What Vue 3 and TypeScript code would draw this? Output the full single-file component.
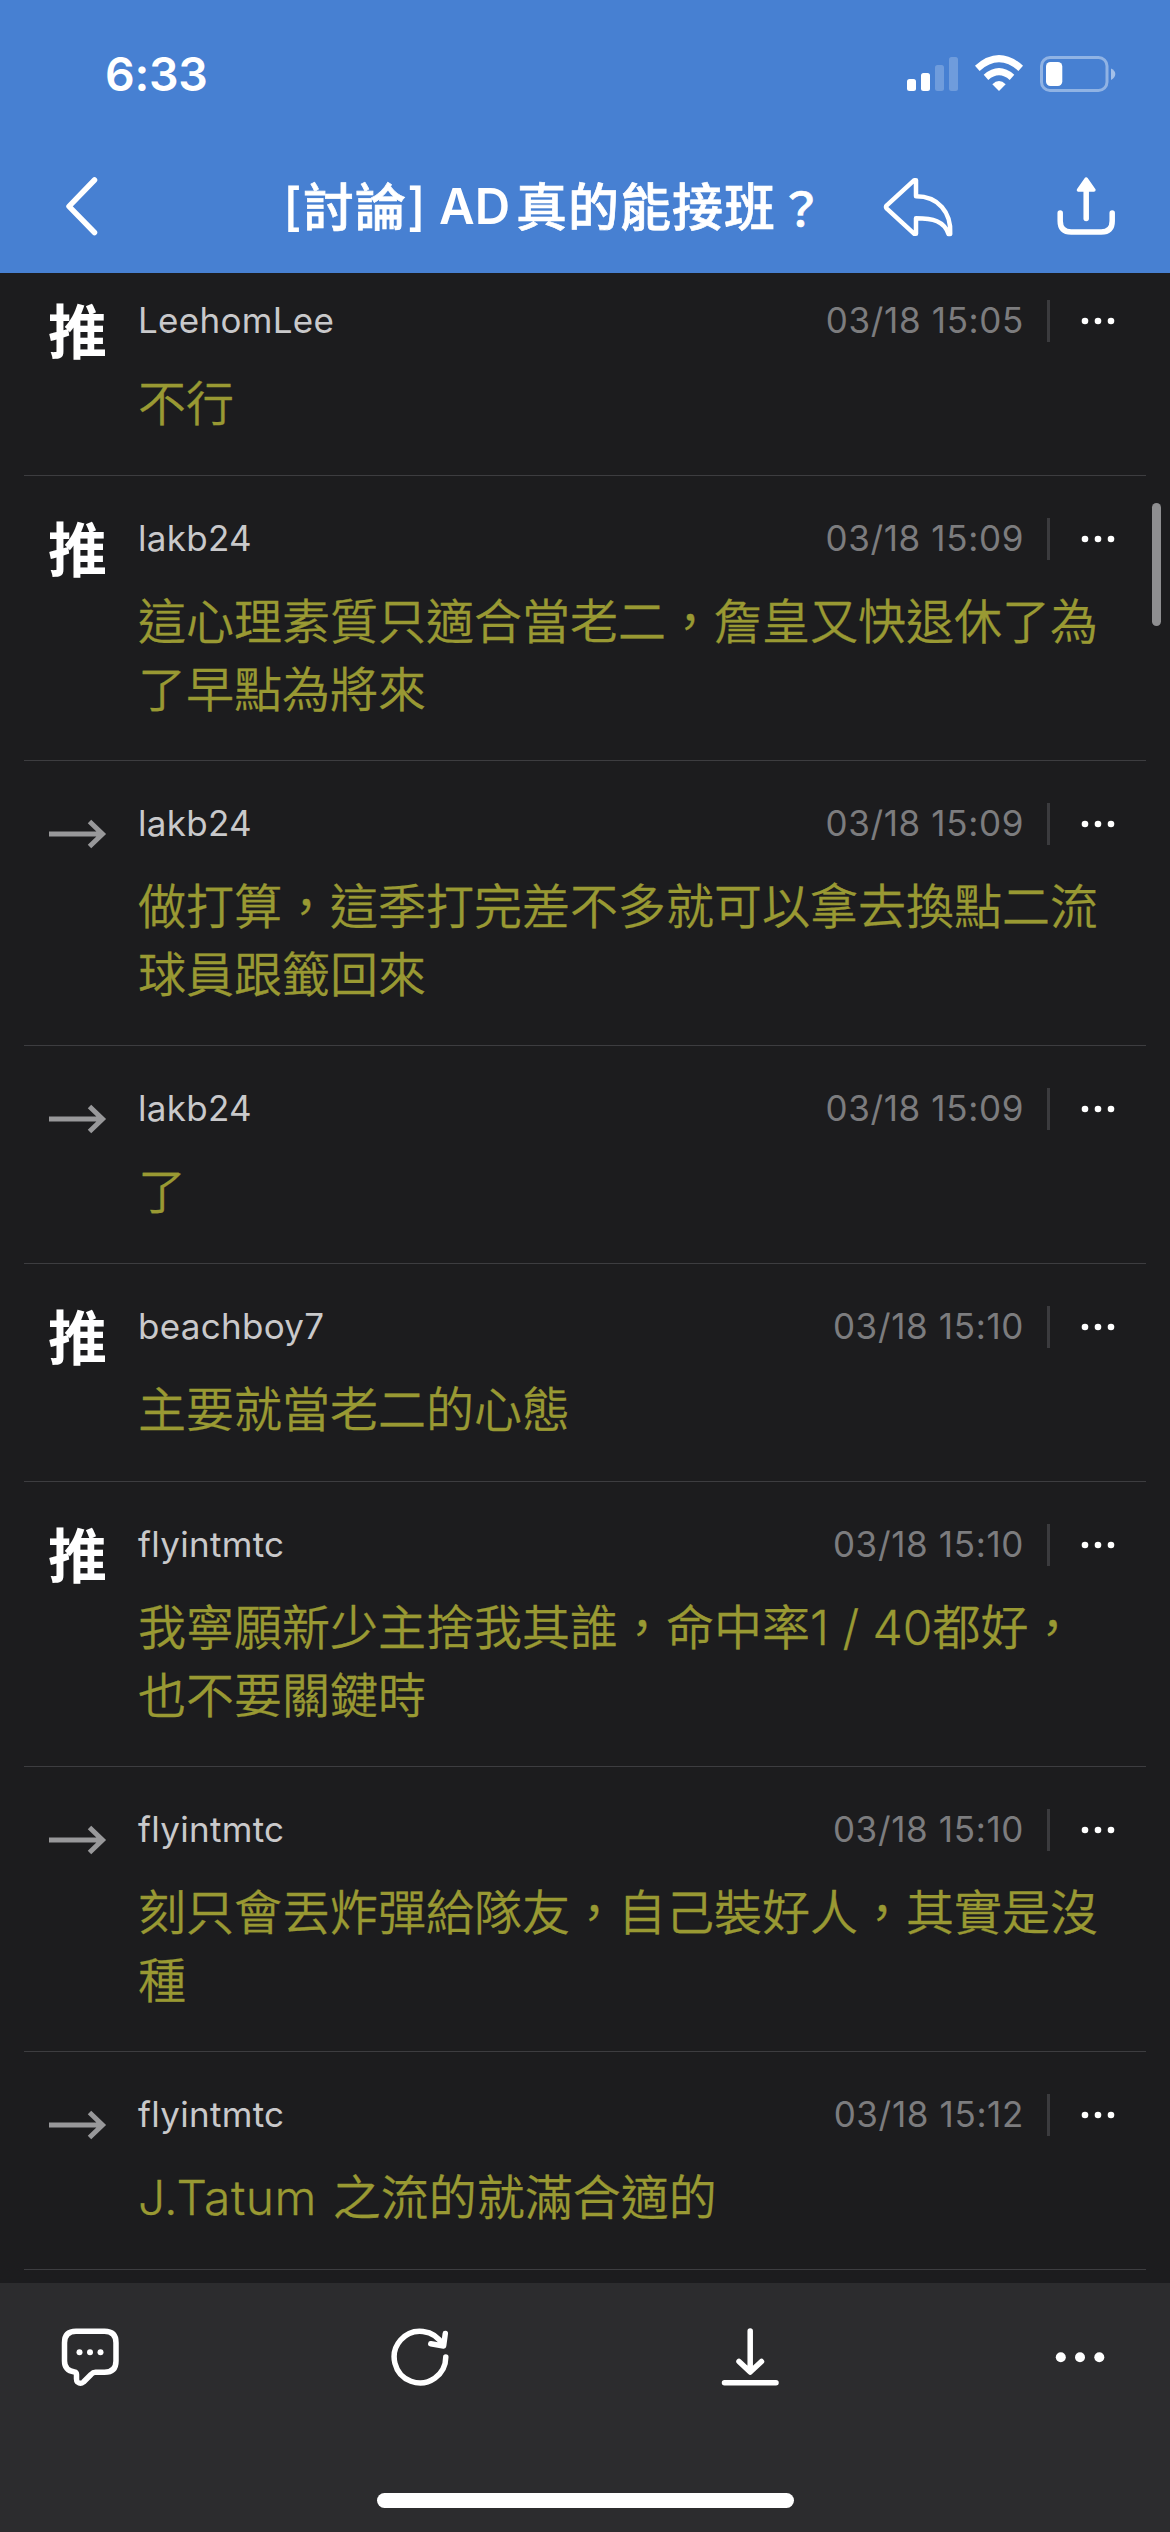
<script setup lang="ts">
interface Comment {
  kind: 'push' | 'arrow'
  user: string
  time: string
  lines: string[]
}

const comments: Comment[] = [
  { kind: 'push', user: 'LeehomLee', time: '03/18 15:05', lines: ['不行'] },
  { kind: 'push', user: 'lakb24', time: '03/18 15:09', lines: ['這心理素質只適合當老二，詹皇又快退休了為', '了早點為將來'] },
  { kind: 'arrow', user: 'lakb24', time: '03/18 15:09', lines: ['做打算，這季打完差不多就可以拿去換點二流', '球員跟籤回來'] },
  { kind: 'arrow', user: 'lakb24', time: '03/18 15:09', lines: ['了'] },
  { kind: 'push', user: 'beachboy7', time: '03/18 15:10', lines: ['主要就當老二的心態'] },
  { kind: 'push', user: 'flyintmtc', time: '03/18 15:10', lines: ['我寧願新少主捨我其誰，命中率1 / 40都好，', '也不要關鍵時'] },
  { kind: 'arrow', user: 'flyintmtc', time: '03/18 15:10', lines: ['刻只會丟炸彈給隊友，自己裝好人，其實是沒', '種'] },
  { kind: 'arrow', user: 'flyintmtc', time: '03/18 15:12', lines: ['J.Tatum 之流的就滿合適的'] },
]

// Latin words get slightly looser tracking than the Han text around them
const runs = (line: string) => line.split(/([A-Za-z.]+ ?)/).filter(Boolean)
const isLatin = (run: string) => /^[A-Za-z]/.test(run)
</script>

<template>
  <div class="screen" lang="zh-Hant-TW">
    <header class="top">
      <div class="status">
        <span class="clock">6:33</span>
        <svg class="indicators" width="212" height="44" viewBox="905 52 212 44" fill="#fff">
          <rect x="907" y="79" width="9" height="12" rx="2.5" />
          <rect x="921" y="73" width="9" height="18" rx="2.5" />
          <rect x="935" y="65" width="9" height="26" rx="2.5" opacity=".22" />
          <rect x="949" y="57" width="9" height="34" rx="2.5" opacity=".22" />
          <path d="M999 91 L992.3 84.2 Q999 77.6 1005.700 84.2 Z" />
          <g fill="none" stroke="#fff" stroke-width="7">
            <path d="M986 77.300 Q999 66 1012 77.300" />
            <path d="M977.300 68.300 Q999 49 1020.700 68.300" />
          </g>
          <rect x="1041.500" y="57.500" width="65.500" height="33" rx="8.500" fill="none" stroke="#fff" stroke-width="3" opacity=".4" />
          <rect x="1046" y="62" width="16.300" height="24" rx="4.500" />
          <path d="M1111 68.500 Q1115.300 70.500 1115.300 74 T1111 80 Z" opacity=".5" />
        </svg>
      </div>
      <nav class="bar">
        <svg width="60" height="60" viewBox="52 176 60 60" class="line back">
          <path d="M94.500 180 L69 206.300 L94.500 232.500" />
        </svg>
        <h1 class="title"><span class="br">[</span><span class="han">討論</span><span class="br close">]</span><span class="latin">AD</span><span class="han">真的能接班<span class="mark-q">？</span></span></h1>
        <svg width="72" height="62" viewBox="882 176 72 62" class="line reply">
          <path d="M914.300 180.200 L886.800 205.300 Q885.300 207 886.800 208.700 L914.300 233.800 H916 V218.300 C933 218.300 944 221 948.500 234 H950.200 C951.500 212 938 196.300 916 196.300 V180.200 Z" />
        </svg>
        <svg width="60" height="62" viewBox="1056 176 60 62" class="line share">
          <path d="M1060.200 213 V221 Q1060.200 232 1071.200 232 H1101.200 Q1112.200 232 1112.200 221 V213" />
          <path d="M1086.200 188 V218.500" />
          <path d="M1086.200 179 L1078.500 190 H1093.900 Z" fill="#fff" stroke-width="3.500" />
        </svg>
      </nav>
    </header>

    <main class="list">
      <article v-for="(c, i) in comments" :key="i" class="row" :class="{ tall: c.lines.length > 1 }">
        <div class="mark">
          <span v-if="c.kind === 'push'" class="push">推</span>
          <svg v-else class="arrow" width="60" height="30" viewBox="0 0 60 30">
            <path d="M0 15 H53 M40.500 2.500 L53.500 15 L40.500 27.500" />
          </svg>
        </div>
        <div class="body">
          <div class="meta">
            <span class="user">{{ c.user }}</span>
            <span class="time">{{ c.time }}</span>
            <i class="rule"></i>
            <svg class="dots" width="36" height="10" viewBox="0 0 36 10">
              <circle cx="5" cy="5" r="3.300" /><circle cx="18" cy="5" r="3.300" /><circle cx="31" cy="5" r="3.300" />
            </svg>
          </div>
          <p class="text">
            <span v-for="l in c.lines" :key="l" class="text-line"><span v-for="(r, n) in runs(l)" :key="n" :class="{ word: isLatin(r) }">{{ r }}</span></span>
          </p>
        </div>
      </article>
      <div class="thumb"></div>
    </main>

    <footer class="bottom">
      <div class="tools">
        <svg width="60" height="60" viewBox="60 2327 60 60" class="line">
          <path d="M76 2331.200 H104.500 Q116 2331.200 116 2342.700 V2361 Q116 2372.300 104.500 2372.300 H95.500 Q93 2372.300 91 2374.500 L83.500 2382 Q80.500 2384.500 77.500 2382 Q76.500 2381 76.500 2379 V2374.500 Q76.500 2372.300 74.500 2372 Q64.500 2370.500 64.500 2361 V2342.700 Q64.500 2331.200 76 2331.200 Z" />
          <g fill="#fff" stroke="none">
            <circle cx="79.500" cy="2352.300" r="3" /><circle cx="90" cy="2352.300" r="3" /><circle cx="100.500" cy="2352.300" r="3" />
          </g>
        </svg>
        <svg width="60" height="60" viewBox="390 2327 60 60" class="line">
          <path d="M445.800 2357 A25.800 25.800 0 1 1 442.800 2345" />
          <path d="M445.300 2333.500 L443.600 2346 L430.800 2343.800" />
        </svg>
        <svg width="60" height="60" viewBox="720 2327 60 60" class="line">
          <path d="M750.200 2331 V2371 M739 2361.500 L750.200 2372 L761.500 2361.500 M724.500 2382.700 H776" />
        </svg>
        <svg width="60" height="60" viewBox="1050 2327 60 60" fill="#fff">
          <circle cx="1060.800" cy="2357.200" r="5" /><circle cx="1080" cy="2357.200" r="5" /><circle cx="1099.300" cy="2357.200" r="5" />
        </svg>
      </div>
      <div class="home"></div>
    </footer>
  </div>
</template>

<style>
body {
  margin: 0;
  background: #1c1c1e;
}
</style>

<style scoped>
.screen {
  width: 1170px;
  height: 2532px;
  display: flex;
  flex-direction: column;
  overflow: hidden;
  background: #1c1c1e;
  font-family: Inter, "Noto Sans CJK TC", sans-serif;
}
.top {
  height: 273px;
  flex: none;
  background: #4780d2;
  color: #fff;
}
.status {
  height: 148px;
  display: flex;
  align-items: center;
  justify-content: space-between;
  padding: 0 53px 0 105px;
}
.clock {
  font-size: 46.5px;
  font-weight: 600;
  line-height: 60px;
  letter-spacing: -0.3px;
}
.bar {
  height: 125px;
  display: flex;
  align-items: flex-start;
  padding: 28px 54px 0 52px;
  box-sizing: border-box;
}
.line {
  fill: none;
  stroke: #fff;
  stroke-width: 5.5;
  stroke-linecap: round;
  stroke-linejoin: round;
}
.back {
  margin-right: 171px;
}
.title {
  margin: 0;
  width: 599px;
  height: 62px;
  line-height: 62px;
  font-size: 51px;
  font-weight: 600;
  white-space: nowrap;
  display: flex;
}
.br {
  width: 20px;
  font-weight: 500;
}
.br.close {
  width: 32px;
}
.han {
  margin-top: -3px;
  font-family: "Noto Sans CJK TC", sans-serif;
  font-weight: 500;
  letter-spacing: 1px;
  -webkit-text-stroke: 0.7px #fff;
}
.mark-q {
  padding-left: 2px;
  font-size: 46px;
}
.latin {
  width: 77px;
  font-size: 49px;
}
.reply {
  stroke-width: 4.5;
  margin-right: 102px;
}
.list {
  position: relative;
  flex: none;
  height: 2010px;
  overflow: hidden;
}
.row {
  height: 218px;
  margin: 0 24px;
  border-bottom: 1px solid #3d3d40;
  box-sizing: border-box;
  display: flex;
}
.row:first-child {
  margin-top: -15px;
}
.row.tall {
  height: 285px;
}
.mark {
  width: 114px;
  flex: none;
}
.push {
  display: block;
  margin: 38px 0 0 24px;
  font: 700 59px/66px "Noto Sans CJK TC", sans-serif;
  color: #fff;
}
.arrow {
  display: block;
  margin: 58px 0 0 25px;
  fill: none;
  stroke: #98989a;
  stroke-width: 5;
}
.body {
  flex: 1;
}
.meta {
  display: flex;
  align-items: center;
  height: 42px;
  margin-top: 42px;
  padding-right: 30px;
  font-size: 35px;
  line-height: 42px;
}
.user {
  flex: 1;
  margin-top: -2px;
  color: #c9c9cb;
  font-weight: 430;
  letter-spacing: 0.3px;
}
.time {
  margin-top: -2px;
  color: #7c7c7e;
  letter-spacing: 0.65px;
}
.rule {
  width: 3px;
  height: 42px;
  margin: 0 30px 0 23px;
  background: #3b3b3e;
}
.dots {
  fill: #fff;
}
.text {
  margin: 28px 0 0;
  font-size: 48px;
  font-weight: 350;
  line-height: 68px;
  color: #999933;
  white-space: nowrap;
  -webkit-text-stroke: 0.3px #999933;
}
.text-line {
  display: block;
  height: 68px;
}
.word {
  white-space: pre;
  letter-spacing: 0.5px;
  word-spacing: 2px;
}
.thumb {
  position: absolute;
  top: 230px;
  left: 1152px;
  width: 9px;
  height: 123px;
  border-radius: 4.5px;
  background: #8e8e90;
}
.bottom {
  flex: 1;
  background: #2c2c2e;
}
.tools {
  display: flex;
  justify-content: space-between;
  padding: 44px 60px 0;
  height: 166px;
}
.home {
  width: 417px;
  height: 15px;
  margin-left: 377px;
  border-radius: 8px;
  background: #fff;
}
</style>
